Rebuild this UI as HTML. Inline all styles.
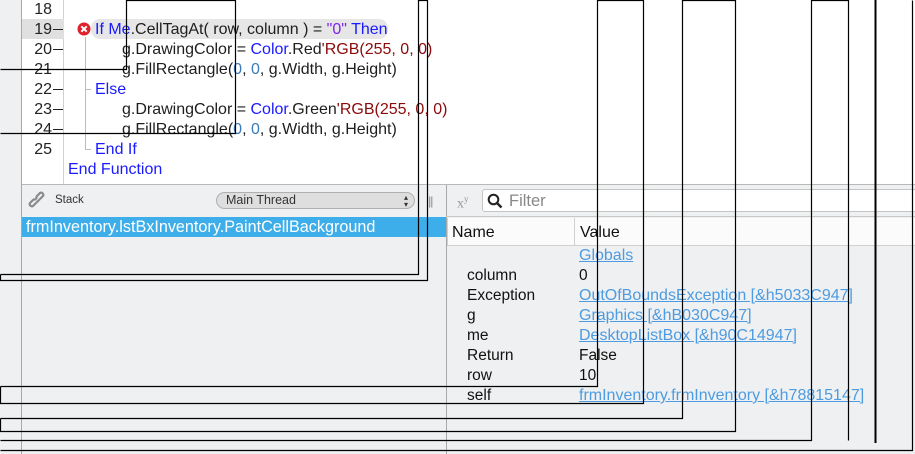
<!DOCTYPE html>
<html><head><meta charset="utf-8"><style>
*{margin:0;padding:0;box-sizing:border-box}
body{width:915px;height:454px;overflow:hidden;background:#eff0f1;font-family:"Liberation Sans","DejaVu Sans",sans-serif;position:relative}
.a{position:absolute;white-space:nowrap}
.code{font-size:16px;line-height:20px;color:#1e1e1e}
.k{color:#1a1aff}.s{color:#7d22f0}.c{color:#8b0a0a}.n{color:#3a7ab8}
.ln{position:absolute;left:22px;width:30px;text-align:right;font-size:16px;line-height:20px;color:#222}
.dash{position:absolute;left:53px;width:10px;height:1px;background:#222}
.v{font-size:15.5px;line-height:20px;color:#111}
.lk{color:#4d9be0;text-decoration:underline;font-size:16px}
</style></head><body>
<div class="a" style="left:0;top:0;width:22px;height:454px;background:#eff0f1;border-right:1px solid #a8a8a8"></div>
<div class="a" style="left:22px;top:0;width:893px;height:185px;background:#fff"></div>
<div class="a" style="left:22px;top:0;width:42px;height:185px;background:#fff;border-right:1px solid #d0d0d0"></div>
<div class="a" style="left:22px;top:19px;width:42px;height:20px;background:#e0e0e0"></div>
<div class="a" style="left:91px;top:19px;width:297px;height:20px;background:#e6e6e6;border-radius:9px"></div>
<div class="ln" style="top:0px">18</div>
<div class="ln" style="top:20px">19</div>
<div class="ln" style="top:40px">20</div>
<div class="ln" style="top:60px">21</div>
<div class="ln" style="top:80px">22</div>
<div class="ln" style="top:100px">23</div>
<div class="ln" style="top:120px">24</div>
<div class="ln" style="top:140px">25</div>
<div class="dash" style="top:29px"></div><div class="dash" style="top:49px"></div><div class="dash" style="top:69px"></div><div class="dash" style="top:89px"></div><div class="dash" style="top:109px"></div><div class="dash" style="top:129px"></div>
<div class="a" style="left:85px;top:37px;width:1px;height:113px;background:#bbb"></div>
<div class="a" style="left:85px;top:89px;width:6px;height:1px;background:#bbb"></div>
<div class="a" style="left:85px;top:149px;width:6px;height:1px;background:#bbb"></div>
<svg class="a" style="left:77px;top:22px" width="14" height="14" viewBox="0 0 14 14"><circle cx="7" cy="7" r="6.5" fill="#e0202a"/><path d="M4.3 4.3L9.7 9.7M9.7 4.3L4.3 9.7" stroke="#fff" stroke-width="2"/></svg>
<div class="a code" style="left:95px;top:20px"><span class="k">If Me</span>.CellTagAt( row, column ) = <span class="s">"0"</span> <span class="k">Then</span></div>
<div class="a code" style="left:122px;top:40px">g.DrawingColor = <span class="k">Color</span>.Red<span class="c">'RGB(255, 0, 0)</span></div>
<div class="a code" style="left:122px;top:60px">g.FillRectangle(<span class="n">0</span>, <span class="n">0</span>, g.Width, g.Height)</div>
<div class="a code" style="left:95px;top:80px"><span class="k">Else</span></div>
<div class="a code" style="left:122px;top:100px">g.DrawingColor = <span class="k">Color</span>.Green<span class="c">'RGB(255, 0, 0)</span></div>
<div class="a code" style="left:122px;top:120px">g.FillRectangle(<span class="n">0</span>, <span class="n">0</span>, g.Width, g.Height)</div>
<div class="a code" style="left:95px;top:140px"><span class="k">End If</span></div>
<div class="a code" style="left:68px;top:160px"><span class="k">End Function</span></div>
<div class="a" style="left:22px;top:184px;width:893px;height:1px;background:#b8b8b8"></div>
<svg class="a" style="left:28px;top:191px" width="20" height="20" viewBox="0 0 20 20"><g fill="none" stroke="#8a8a8a" stroke-width="2.2"><path d="M8 12l-3 3a2.2 2.2 0 0 1-3-3l3-3a2.2 2.2 0 0 1 3 0"/><path d="M12 8l3-3a2.2 2.2 0 0 0-3-3l-3 3a2.2 2.2 0 0 0 0 3"/><path d="M8 12l4-4"/></g></svg>
<div class="a" style="left:55px;top:194px;font-size:11.5px;color:#333">Stack</div>
<div class="a" style="left:216px;top:192px;width:199px;height:17px;border:1px solid #b0b0b0;border-radius:9px;background:#dedede;font-size:12.5px;line-height:15px;padding-left:9px;color:#333">Main Thread<span style="position:absolute;right:6px;top:1px;font-size:8px;line-height:7px">▴<br>▾</span></div>
<div class="a" style="left:426px;top:194px;font-size:12px;color:#888;letter-spacing:-1px">|||</div>
<div class="a" style="left:446px;top:185px;width:1px;height:269px;background:#a8a8a8"></div>
<div class="a" style="left:457px;top:194px;font-family:'Liberation Serif',serif;font-size:14px;color:#999">x<sup style="font-size:9px">y</sup></div>
<div class="a" style="left:482px;top:189px;width:440px;height:23px;background:#fff;border:1px solid #c4c4c4;border-radius:3px"></div>
<svg class="a" style="left:487px;top:193px" width="16" height="16" viewBox="0 0 16 16"><circle cx="6.5" cy="6.5" r="4.8" fill="none" stroke="#222" stroke-width="2"/><path d="M10 10l4.5 4.5" stroke="#222" stroke-width="2.4"/></svg>
<div class="a" style="left:509px;top:191px;font-size:16.5px;line-height:20px;color:#888">Filter</div>
<div class="a" style="left:446px;top:216px;width:469px;height:1px;background:#c8c8c8"></div>
<div class="a" style="left:22px;top:217px;width:424px;height:20px;background:#3daee9;color:#fff;font-size:16.2px;line-height:21px;padding-left:4px">frmInventory.lstBxInventory.PaintCellBackground</div>
<div class="a" style="left:447px;top:218px;width:468px;height:28px;background:#fbfbfb;border-bottom:1px solid #d0d0d0;border-left:1px solid #d0d0d0"></div>
<div class="a" style="left:574px;top:218px;width:1px;height:27px;background:#d0d0d0"></div>
<div class="a v" style="left:452px;top:223px;font-size:16px">Name</div>
<div class="a v" style="left:580px;top:223px;font-size:16px">Value</div>
<div class="a v lk" style="left:579px;top:246px">Globals</div>
<div class="a v" style="left:467px;top:266px">column</div><div class="a v" style="left:579px;top:266px">0</div>
<div class="a v" style="left:467px;top:286px">Exception</div><div class="a v lk" style="left:579px;top:286px">OutOfBoundsException [&amp;h5033C947]</div>
<div class="a v" style="left:467px;top:306px">g</div><div class="a v lk" style="left:579px;top:306px">Graphics [&amp;hB030C947]</div>
<div class="a v" style="left:467px;top:326px">me</div><div class="a v lk" style="left:579px;top:326px">DesktopListBox [&amp;h90C14947]</div>
<div class="a v" style="left:467px;top:346px">Return</div><div class="a v" style="left:579px;top:346px">False</div>
<div class="a v" style="left:467px;top:366px">row</div><div class="a v" style="left:579px;top:366px">10</div>
<div class="a v" style="left:467px;top:386px">self</div><div class="a v lk" style="left:579px;top:386px">frmInventory.frmInventory [&amp;h78815147]</div>
<svg class="a" style="left:0;top:0" width="915" height="454" viewBox="0 0 915 454"><g fill="none" stroke="#000" stroke-width="1.2">
<polyline points="0.5,69.5 126.5,69.5 126.5,0.5 235.5,0.5 235.5,133.5 0.5,133.5"/>
<polyline points="0.5,274.5 418.5,274.5 418.5,0.5 427.5,0.5 427.5,280.5 0.5,280.5 0.5,274.5"/>
<polyline points="0.5,386.5 597.5,386.5 597.5,0.5 643.5,0.5 643.5,403.5 0.5,403.5 0.5,386.5"/>
<polyline points="0.5,418.5 682.5,418.5 682.5,0.5 735.5,0.5 735.5,431.5 0.5,431.5 0.5,418.5"/>
<polyline points="0.5,440.5 811.5,440.5 811.5,0.5 848.5,0.5 848.5,440.5"/>
<polyline points="0.5,450.5 912.5,450.5 912.5,0.5"/>
</g><path d="M875.5 0V443" stroke="#000" stroke-width="2"/></svg>
</body></html>
